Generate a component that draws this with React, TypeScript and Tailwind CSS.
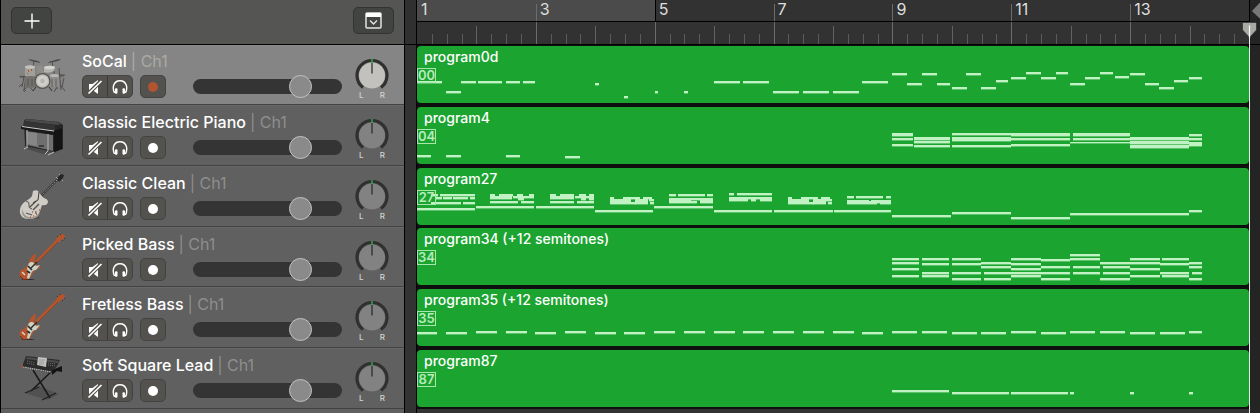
import { useState, type ReactNode } from "react";

type Note = [x: number, y: number, w: number, h?: number];

/** Repeats one x / width for several pitches. */
const stack = (x: number, w: number, ys: number[]): Note[] => ys.map((y) => [x, y, w]);

const drumNotes: Note[] = [
  [0, 35, 25], [29, 45, 15], [44, 35, 15], [61, 35, 24], [89, 35, 14], [106, 35, 12],
  [178, 37, 4], [207, 50, 4], [238, 45, 3], [267, 45, 4], [297, 35, 26], [326, 35, 26],
  [356, 45, 26], [386, 45, 26], [416, 45, 26], [445, 35, 26],
  [475, 27, 15], [490, 37, 15], [505, 27, 15], [520, 37, 13], [535, 41, 15], [549, 27, 15],
  [564, 41, 15], [579, 34, 12], [594, 31, 15], [609, 26, 15], [624, 31, 15], [639, 26, 12],
  [653, 37, 15], [668, 31, 15], [683, 26, 13], [698, 30, 14], [713, 27, 15], [728, 37, 14],
  [742, 41, 15], [757, 34, 14], [772, 31, 13],
];

const pianoNotes: Note[] = [
  [0, 48, 14], [29, 48, 15], [89, 48, 14], [148, 49, 15],
  [475, 26, 21, 3], [475, 31, 21], [475, 37, 21],
  [497, 30, 36, 3], [497, 34, 36], [497, 38, 36],
  [535, 26, 59], [535, 30, 59, 4], [535, 38, 59],
  [594, 26, 59, 3], [594, 31, 59], [594, 37, 59],
  [656, 26, 57, 3], [656, 31, 57], [653, 35, 60, 1],
  [713, 30, 59, 3], [713, 34, 59, 3], [713, 38, 59, 3],
  [772, 27, 13], [772, 31, 13], [772, 35, 13, 4],
];

const guitarNotes: Note[] = [
  [14, 26, 7], [23, 26, 35], [18, 29, 7], [26, 29, 9], [36, 29, 15], [53, 29, 5],
  [14, 34, 30], [46, 34, 12], [0, 40, 58],
  [73, 28, 22, 3], [96, 28, 21, 2], [101, 30, 6], [73, 26, 5], [82, 26, 14], [100, 26, 6], [112, 26, 5],
  [73, 33, 28], [104, 33, 13], [59, 38, 58],
  [133, 28, 24, 3], [158, 28, 19, 2], [164, 30, 5], [172, 30, 5], [133, 26, 6], [143, 26, 14], [162, 26, 7], [172, 26, 5],
  [133, 33, 24], [160, 33, 17], [119, 38, 58],
  [193, 31, 21, 5], [218, 31, 13, 5], [232, 31, 5, 2], [233, 34, 4], [214, 34, 5], [193, 29, 4], [206, 29, 17], [226, 29, 9],
  [178, 42, 58],
  [252, 26, 7], [261, 26, 27], [290, 26, 6], [252, 30, 44], [252, 32, 22, 3], [274, 33, 6], [283, 32, 13, 3],
  [237, 38, 59],
  [312, 25, 5], [320, 25, 35], [312, 29, 19, 4], [331, 29, 24, 2], [334, 31, 5], [343, 31, 12],
  [297, 42, 58],
  [371, 31, 21, 5], [396, 31, 13, 5], [409, 31, 6, 2], [411, 34, 4], [392, 34, 5], [371, 29, 4], [384, 29, 17], [404, 29, 9],
  [357, 42, 59],
  [430, 28, 7], [439, 28, 27], [469, 28, 5], [430, 32, 22, 4], [452, 33, 22, 2], [454, 32, 20, 1], [452, 35, 8, 1], [463, 35, 11, 1],
  [417, 42, 57],
  [475, 47, 59], [535, 44, 59], [594, 49, 59], [653, 45, 119], [772, 42, 13],
];

const pickedNotes: Note[] = [
  ...stack(475, 27, [30, 34, 40, 47]),
  ...stack(505, 27, [30, 35, 44, 47]),
  ...stack(535, 29, [30, 35, 44, 50]),
  ...stack(564, 30, [34, 38]),
  ...stack(567, 27, [44, 50]),
  ...stack(594, 30, [30, 35, 40, 44, 47]),
  ...stack(624, 29, [31, 38, 44, 50]),
  ...stack(653, 30, [26, 30]),
  ...stack(656, 27, [38, 44]),
  ...stack(683, 30, [34, 50]),
  ...stack(686, 27, [38, 44]),
  ...stack(713, 30, [30, 34, 40, 47]),
  ...stack(743, 29, [35, 44]),
  ...stack(745, 27, [30, 47]),
  ...stack(772, 13, [34, 38, 50]),
  ...stack(775, 10, [44]),
];

const fretlessNotes: Note[] = [
  [0, 43, 20], [29, 43, 21], [59, 42, 21], [89, 42, 21], [118, 43, 21], [148, 42, 21],
  [178, 43, 21], [207, 43, 21], [237, 42, 21], [267, 42, 21], [297, 42, 21], [326, 42, 21],
  [356, 42, 21], [386, 42, 21], [416, 42, 21], [445, 43, 21],
  [475, 42, 25], [505, 42, 25], [535, 43, 25], [564, 43, 25], [594, 42, 25], [624, 43, 25],
  [653, 42, 25], [683, 42, 25], [713, 43, 25], [743, 43, 25], [772, 42, 13],
];

const leadNotes: Note[] = [
  [475, 40, 57], [535, 42, 57], [594, 42, 57], [653, 42, 4], [713, 42, 4], [772, 42, 4],
];

function DrumKit() {
  return (
    <svg viewBox="0 0 48 48" className="size-12" aria-hidden="true">
      <g stroke="#3a3a3a" strokeWidth="0.700" fill="none">
        <path d="M15 11 11 38M33 11l5 28M5 27l-2 10M3 34l-4 4M6 32l-1 8M7 40l-2 2M40 18l2 22M42 36l4 5M38 37l-3 5M9 36l-5 5M10 36l4 5M45 28l-2 9M1 27h7M38 26h7" />
      </g>
      <ellipse cx="15.500" cy="11" rx="6" ry="0.800" transform="rotate(14 15.500 11)" fill="#4a4a48" />
      <ellipse cx="35.500" cy="11" rx="6.500" ry="0.800" transform="rotate(-14 35.500 11)" fill="#4a4a48" />
      <ellipse cx="5" cy="26.500" rx="5" ry="0.800" fill="#54534f" />
      <ellipse cx="42" cy="25" rx="4.500" ry="0.800" fill="#54534f" />
      <path d="M6 17q5-3 10 0v9q-5 3-10 0z" fill="#a19f9a" />
      <ellipse cx="11" cy="17" rx="5" ry="1.800" fill="#c4c2be" />
      <path d="M9 20h1v2H9zM12 19h1v2h-1zM8 23h1v1H8z" fill="#b4542c" />
      <path d="M17 17q4-3 7-1l1 7-6 2z" fill="#8f8d89" />
      <path d="M25 18q5-4 11-1l-1 4q-5 3-10 1z" fill="#b5b3ae" />
      <ellipse cx="30.500" cy="17.500" rx="5.500" ry="1.800" fill="#d4d2cd" />
      <path d="M5 27q6-2 13 0l-1 10q-6 2-11 0z" fill="#73716e" />
      <path d="M31 25q5-2 9 0v11q-4 3-9 0z" fill="#908e8a" />
      <ellipse cx="35.500" cy="25.500" rx="4.500" ry="1.500" fill="#b9b7b3" />
      <path d="M33 29v8M37 29v8M9 29v7M13 29v7" stroke="#54534f" strokeWidth="0.800" />
      <circle cx="23.500" cy="31" r="8" fill="#55534f" />
      <circle cx="23.500" cy="31" r="6.800" fill="#bbb9b3" />
      <circle cx="23.500" cy="31" r="5.500" fill="#d0cec8" />
      <circle cx="23.500" cy="31" r="2.200" fill="#b5b3ad" />
      <path d="M17 37l-3 4M30 37l3 4" stroke="#2d2d2d" strokeWidth="1" />
    </svg>
  );
}

function UprightPiano() {
  return (
    <svg viewBox="0 0 48 48" className="size-12" aria-hidden="true">
      <path d="M5 35 40 42 24 44 8 39z" fill="#4c4c4c" />
      <path d="M5 10 8 9l32 3 4 3v24l-9 3-29-6z" fill="#262626" />
      <path d="M8 9l30 3 5 2-5 1L5 11z" fill="#4a4a4a" />
      <path d="M7 21l27 4v16L8 35z" fill="#6f6f6f" />
      <path d="M8 22l10 1v13L9 34z" fill="#868686" />
      <path d="M5 11l31 4v6L4 16z" fill="#343434" />
      <path d="M2 16l34 5 4-1v3l-5 2L2 19z" fill="#191919" />
      <path d="M3 16.500l32 4.500" stroke="#cfcfcf" strokeWidth="1" />
      <path d="M35 21l8-3v21l-8 3z" fill="#141414" />
      <path d="M8 20v17M29 24v17" stroke="#a9a9a9" strokeWidth="1.200" />
      <path d="M9 37l-4 2M29 41l-3 3M35 42l-6 3" stroke="#bdbdbd" strokeWidth="1" />
      <path d="M20 36h5" stroke="#1b1b1b" strokeWidth="1.200" />
    </svg>
  );
}

function HollowGuitar() {
  return (
    <svg viewBox="0 0 48 48" className="size-12" aria-hidden="true">
      <ellipse cx="12" cy="47" rx="9" ry="1" fill="#4b4b4b" />
      <path d="M20 27 42 5" stroke="#3c3a38" strokeWidth="2.200" />
      <path d="M20 27 42 5" stroke="#a6a39e" strokeWidth="0.900" strokeDasharray="1.500 1.500" />
      <path d="M38 7l4-4 3 1-1 3-4 4z" fill="#262424" />
      <path d="M37 6l2 2M40 3l1 1M43 9l1 1" stroke="#bbb" strokeWidth="0.800" />
      <path d="M14 20q4-2 6 1 2 4 5 6 4 1 4 4-1 4-6 3-1 3-2 6-2 7-10 8-8 1-10-6-1-8 6-12 5-3 6-5z" fill="#cfccc6" />
      <path d="M3 38q-1 8 6 10 9 1 12-6-5 5-11 4-5-1-7-8z" fill="#9d9993" />
      <path d="M11 36l6-6M14 39l6-6" stroke="#5a5652" strokeWidth="1.500" />
      <path d="M7 30q4 1 3 4t3 4M17 40q-1 2 1 4" stroke="#46433f" strokeWidth="0.900" fill="none" />
      <path d="M7 42l6 2" stroke="#5a5652" strokeWidth="1.300" />
      <path d="M11 46h1M14 45h1M17 43h1M20 39h1M13 41h1" stroke="#c05a2d" strokeWidth="1.300" />
      <path d="M20 21l-1 8-5 3" stroke="#3c3a38" strokeWidth="1" fill="none" />
    </svg>
  );
}

function BassGuitar() {
  return (
    <svg viewBox="0 0 48 48" className="size-12" aria-hidden="true">
      <ellipse cx="9" cy="48" rx="7" ry="1.200" fill="#2b2b2b" />
      <path d="M15 32 39 8" stroke="#b5532b" strokeWidth="2.600" />
      <path d="M17 32 40 9" stroke="#7d4630" strokeWidth="0.800" />
      <path d="M37 8q2-5 6-6l3 1-1 4q-3 0-5 4z" fill="#b5532b" />
      <path d="M38 4l1 1M41 2l1 1M43 8l1 1M45 6l1 1" stroke="#333" strokeWidth="0.900" />
      <path d="M16 22q2 1 0 5l-2 4 5 3q3 0 2 2l-5 2q-3 5-5 8-5 3-9 0-3-4 0-8 6-2 8-8 2-6 6-8z" fill="#b5532b" />
      <path d="M10 31q3-2 5 0l2 3 4-1-4 5q-4 0-5 4l-2 5-2-1 1-5q-2-4 1-10z" fill="#c9d3c6" />
      <path d="M9 34l4 4M8 39l3 2" stroke="#2d2a28" strokeWidth="1.700" />
      <path d="M12 36 18 30" stroke="#3a2a22" strokeWidth="1.400" />
      <path d="M3 40l3 3" stroke="#ded8cf" strokeWidth="1.400" />
      <path d="M1 44q3 5 8 4" stroke="#6e3018" strokeWidth="1" fill="none" />
    </svg>
  );
}

function SynthOnStand() {
  return (
    <svg viewBox="0 0 48 48" className="size-12" aria-hidden="true">
      <path d="M6 40 20 33 40 41 28 47z" fill="#515151" />
      <path d="M14 17 31 45M33 18 12 38" stroke="#191919" strokeWidth="1.500" />
      <path d="M6 40l14-6M23 47l14-7" stroke="#222" strokeWidth="1.300" />
      <path d="M7 3 41 7l-3 6-6 7L3 14z" fill="#2b2b2b" />
      <path d="M8 4 40 8l-1 2L7 6z" fill="#4c4c4c" />
      <path d="M19 4l9 1-1 9-9-2z" fill="#c3c3c1" />
      <path d="M20 7h6M20 9h5M20 11h5" stroke="#7f7f7d" strokeWidth="0.600" />
      <path d="M4 14l28 5" stroke="#b4b4b4" strokeWidth="1.200" strokeDasharray="1.600 0.600" />
      <path d="M8 8l8 2M8 10l8 2M29 10l8 1M29 12l7 1" stroke="#8d8d8d" strokeWidth="0.700" strokeDasharray="1 1" />
      <path d="M3 12v3" stroke="#b4542c" strokeWidth="1.200" />
      <path d="M33 17l10-4v6l-5-1-5 4z" fill="#141414" />
    </svg>
  );
}

interface Track {
  name: string;
  icon: ReactNode;
  selected?: boolean;
  region: string;
  badge: string;
  notes: Note[];
}

const tracks: Track[] = [
  { name: "SoCal", icon: <DrumKit />, selected: true, region: "program0d", badge: "00", notes: drumNotes },
  { name: "Classic Electric Piano", icon: <UprightPiano />, region: "program4", badge: "04", notes: pianoNotes },
  { name: "Classic Clean", icon: <HollowGuitar />, region: "program27", badge: "27", notes: guitarNotes },
  { name: "Picked Bass", icon: <BassGuitar />, region: "program34 (+12 semitones)", badge: "34", notes: pickedNotes },
  { name: "Fretless Bass", icon: <BassGuitar />, region: "program35 (+12 semitones)", badge: "35", notes: fretlessNotes },
  { name: "Soft Square Lead", icon: <SynthOnStand />, region: "program87", badge: "87", notes: leadNotes },
];

function MuteIcon() {
  return (
    <svg viewBox="0 0 16 16" className="size-4" aria-hidden="true">
      <path d="M2 5h3.500L11 1v14l-5.500-4H2z" fill="#fff" />
      <path d="M1 15 15 1" stroke="#53524f" strokeWidth="4" />
      <path d="M1.500 14.500 14.500 2" stroke="#fff" strokeWidth="1.700" />
    </svg>
  );
}

function SoloIcon() {
  return (
    <svg viewBox="0 0 16 16" className="size-4" aria-hidden="true">
      <path d="M2.600 14C1 11 1 9 1.500 6.800 2.500 3.500 5 1.800 8 1.800s5.500 1.700 6.500 5c.5 2.200.5 4.200-1.100 7.200" fill="none" stroke="#fff" strokeWidth="1.400" />
      <rect x="3" y="9.300" width="2.500" height="5.400" rx="0.900" fill="#fff" />
      <rect x="10.500" y="9.300" width="2.500" height="5.400" rx="0.900" fill="#fff" />
    </svg>
  );
}

function PanKnob({ name, selected }: { name: string; selected?: boolean }) {
  return (
    <div
      role="slider"
      tabIndex={0}
      aria-label={`${name} pan`}
      aria-valuemin={-64}
      aria-valuemax={63}
      aria-valuenow={0}
      className="mt-3 mr-[15px] ml-[13px] flex w-[34px] shrink-0 flex-col"
    >
      <svg viewBox="0 0 34 34" className="size-[34px]" aria-hidden="true">
        <path d="M8 29.500A15 15 0 1 1 26 29.500" fill="none" stroke="#303030" strokeWidth="3.200" />
        <circle cx="17" cy="17.500" r="13" fill={selected ? "#c2c1bd" : "#828282"} />
        <path d="M17 5v10.500" stroke="#262626" strokeWidth="1.200" />
        <path d="M17 1v4" stroke="#2fb24a" strokeWidth="1.400" />
      </svg>
      <div className="-mt-[2px] flex justify-between px-1 text-[8px] leading-[10px] font-medium text-[#d4d4d0]">
        <span>L</span>
        <span>R</span>
      </div>
    </div>
  );
}

function TrackHeader({ track }: { track: Track }) {
  const [volume, setVolume] = useState(76);
  const { name, icon, selected } = track;
  return (
    <li
      className={`flex h-[61px] border-y border-b-[#424242] nth-[3n+1]:h-[60px] ${
        selected ? "border-t-[#8c8c8c] bg-[#858585]" : "border-t-[#686868] bg-[#606060]"
      }`}
    >
      <div className="ml-[18px] w-12 shrink-0 pt-1">{icon}</div>
      <div className={`flex flex-1 flex-col gap-1 pl-[15px] ${selected ? "pt-[5px]" : "pt-[6px]"}`}>
        <h2 className="flex gap-1 text-base leading-5 font-medium whitespace-nowrap text-white">
          {name}
          <span className={`font-normal ${selected ? "text-[#aca9a4]" : "text-[#8e8e8e]"}`}>| Ch1</span>
        </h2>
        <div className="flex items-center">
          <div className="flex h-[23px] w-[51px] overflow-hidden rounded-[5px] border border-[#434341] bg-[#53524f]">
            <button type="button" aria-label={`Mute ${name}`} className="flex flex-1 items-center justify-center border-r border-[#3b3b39]">
              <MuteIcon />
            </button>
            <button type="button" aria-label={`Solo ${name}`} className="flex flex-1 items-center justify-center">
              <SoloIcon />
            </button>
          </div>
          <button
            type="button"
            aria-label={`Record enable ${name}`}
            className="ml-[7px] flex h-[23px] w-[26px] items-center justify-center rounded-[5px] border border-[#434341] bg-[#53524f]"
          >
            <span className={`size-[10px] rounded-full ${selected ? "bg-[#b0552f]" : "bg-white"}`} />
          </button>
          <input
            type="range"
            aria-label={`${name} volume`}
            min={0}
            max={100}
            value={volume}
            onChange={(e) => setVolume(Number(e.target.value))}
            className="ml-[27px] h-[23px] w-0 flex-1 appearance-none bg-transparent [&::-webkit-slider-runnable-track]:h-[15px] [&::-webkit-slider-runnable-track]:rounded-full [&::-webkit-slider-runnable-track]:bg-[#343434] [&::-webkit-slider-thumb]:-mt-1 [&::-webkit-slider-thumb]:size-[23px] [&::-webkit-slider-thumb]:appearance-none [&::-webkit-slider-thumb]:rounded-full [&::-webkit-slider-thumb]:border [&::-webkit-slider-thumb]:border-[#c4c2be] [&::-webkit-slider-thumb]:bg-[#8a8a8a]"
          />
        </div>
      </div>
      <PanKnob name={name} selected={selected} />
    </li>
  );
}

function Region({ track }: { track: Track }) {
  return (
    <li className="flex h-[61px] items-end pb-[2px] nth-[3n+1]:h-[60px]">
      <div className="relative h-[57px] w-full overflow-hidden rounded-[4px] bg-[#1ba430]">
        <svg viewBox="0 0 832 57" preserveAspectRatio="none" shapeRendering="crispEdges" className="absolute inset-0 size-full" aria-hidden="true">
          {track.notes.map(([x, y, w, h = 2], i) => (
            <g key={i} fill="#c0f2c4">
              <rect x={x} y={y} width={w} height={h + 1} opacity="0.4" />
              <rect x={x} y={y} width={w} height={h} />
            </g>
          ))}
        </svg>
        <p className="relative px-[7px] pt-px text-sm leading-5 font-medium whitespace-nowrap text-white">{track.region}</p>
        <span className="relative mt-px flex h-[15px] w-[19px] items-center justify-center border border-[#a8e6ad] text-[13px] leading-[13px] font-semibold text-[#b5ecb9]">
          {track.badge}
        </span>
      </div>
    </li>
  );
}

function RulerSection({ bar }: { bar: number }) {
  const cycle = bar < 5;
  return (
    <div className="flex h-full flex-col">
      <div className={`h-[22px] border-b border-black ${bar === 5 ? "" : "pt-1"} ${cycle ? "bg-[#4b4b4b]" : ""}`}>
        <div className={`h-full border-l ${bar === 1 ? "border-transparent" : bar === 5 ? "border-black pt-1" : "border-[#6c6c6c]"}`}>
          <span className="block pl-[3px] text-base leading-[11px] text-[#dedede]">{bar}</span>
        </div>
      </div>
      <div className="grid flex-1 grid-cols-8 items-end">
        {Array.from({ length: 8 }, (_, beat) => (
          <span
            key={beat}
            className={`border-l ${
              beat === 0 ? (bar === 1 ? "h-full border-transparent" : "h-full border-[#6c6c6c]") : beat === 4 ? "h-[18px] border-[#626262]" : "h-[10px] border-[#5a5a5a]"
            }`}
          />
        ))}
      </div>
    </div>
  );
}

export default function App() {
  return (
    <div className="flex min-h-screen bg-[#333333] font-[Inter,'Liberation_Sans',sans-serif]">
      <aside className="w-[405px] shrink-0 border-x border-black bg-[#606060]">
        <header className="flex h-[45px] items-start justify-between border-b border-black bg-[#555553] px-[10px] pt-[7px]">
          <button type="button" aria-label="Add track" className="flex h-[27px] w-[41px] items-center justify-center rounded-[5px] border border-[#333] bg-[#424442]">
            <svg viewBox="0 0 16 16" className="size-4" aria-hidden="true">
              <path d="M8 .5v15M.5 8h15" stroke="#fff" strokeWidth="1.400" />
            </svg>
          </button>
          <button type="button" aria-label="Track header options" className="flex h-[27px] w-[41px] items-center justify-center rounded-[5px] border border-[#333] bg-[#424442]">
            <svg viewBox="0 0 17 17" className="size-[17px]" aria-hidden="true">
              <rect x="1" y="1" width="15" height="15" rx="1" fill="none" stroke="#e4e4e0" strokeWidth="1.500" />
              <path d="M1 1h15v4H1z" fill="#fff" />
              <path d="M5 8.500 8.500 12 12 8.500" fill="none" stroke="#e4e4e0" strokeWidth="1.400" />
            </svg>
          </button>
        </header>
        <ul>
          {tracks.map((t) => (
            <TrackHeader key={t.name} track={t} />
          ))}
        </ul>
      </aside>

      <main className="flex min-w-0 flex-1">
        <div className="w-3 shrink-0 border-r border-black bg-[#333333]">
          <div className="h-[45px] border-b border-black bg-[#303030]" />
        </div>
        <div className="relative min-w-0 flex-1">
          <div className="grid h-[45px] grid-cols-7 border-b border-black bg-[#323232]">
            {[1, 3, 5, 7, 9, 11, 13].map((bar) => (
              <RulerSection key={bar} bar={bar} />
            ))}
          </div>
          <ul className="bg-[#0f0f0f]">
            {tracks.map((t) => (
              <Region key={t.name} track={t} />
            ))}
          </ul>
          <div className="absolute top-[22px] bottom-0 left-full flex w-px flex-col items-center bg-[#e8e8e8]" aria-hidden="true">
            <svg viewBox="0 0 15 16" className="h-4 w-[15px] shrink-0">
              <path d="M1.500.5h12q1 0 1 1V8L8 15H7L.5 8V1.500q0-1 1-1z" fill="#aaa8a4" stroke="#222" strokeWidth="0.600" />
              <path d="M7.500 3.500V16" stroke="#fff" strokeWidth="1.200" />
            </svg>
          </div>
        </div>
        <div className="w-[11px] shrink-0 border-l border-black bg-[#242424]">
          <div className="flex h-[45px] items-start justify-end overflow-hidden border-b border-black">
            <svg viewBox="0 0 10 22" className="h-[22px] w-[9px]" aria-hidden="true">
              <path d="M10 1.500 1 11l9 8.500z" fill="#777" />
            </svg>
          </div>
        </div>
      </main>
    </div>
  );
}
